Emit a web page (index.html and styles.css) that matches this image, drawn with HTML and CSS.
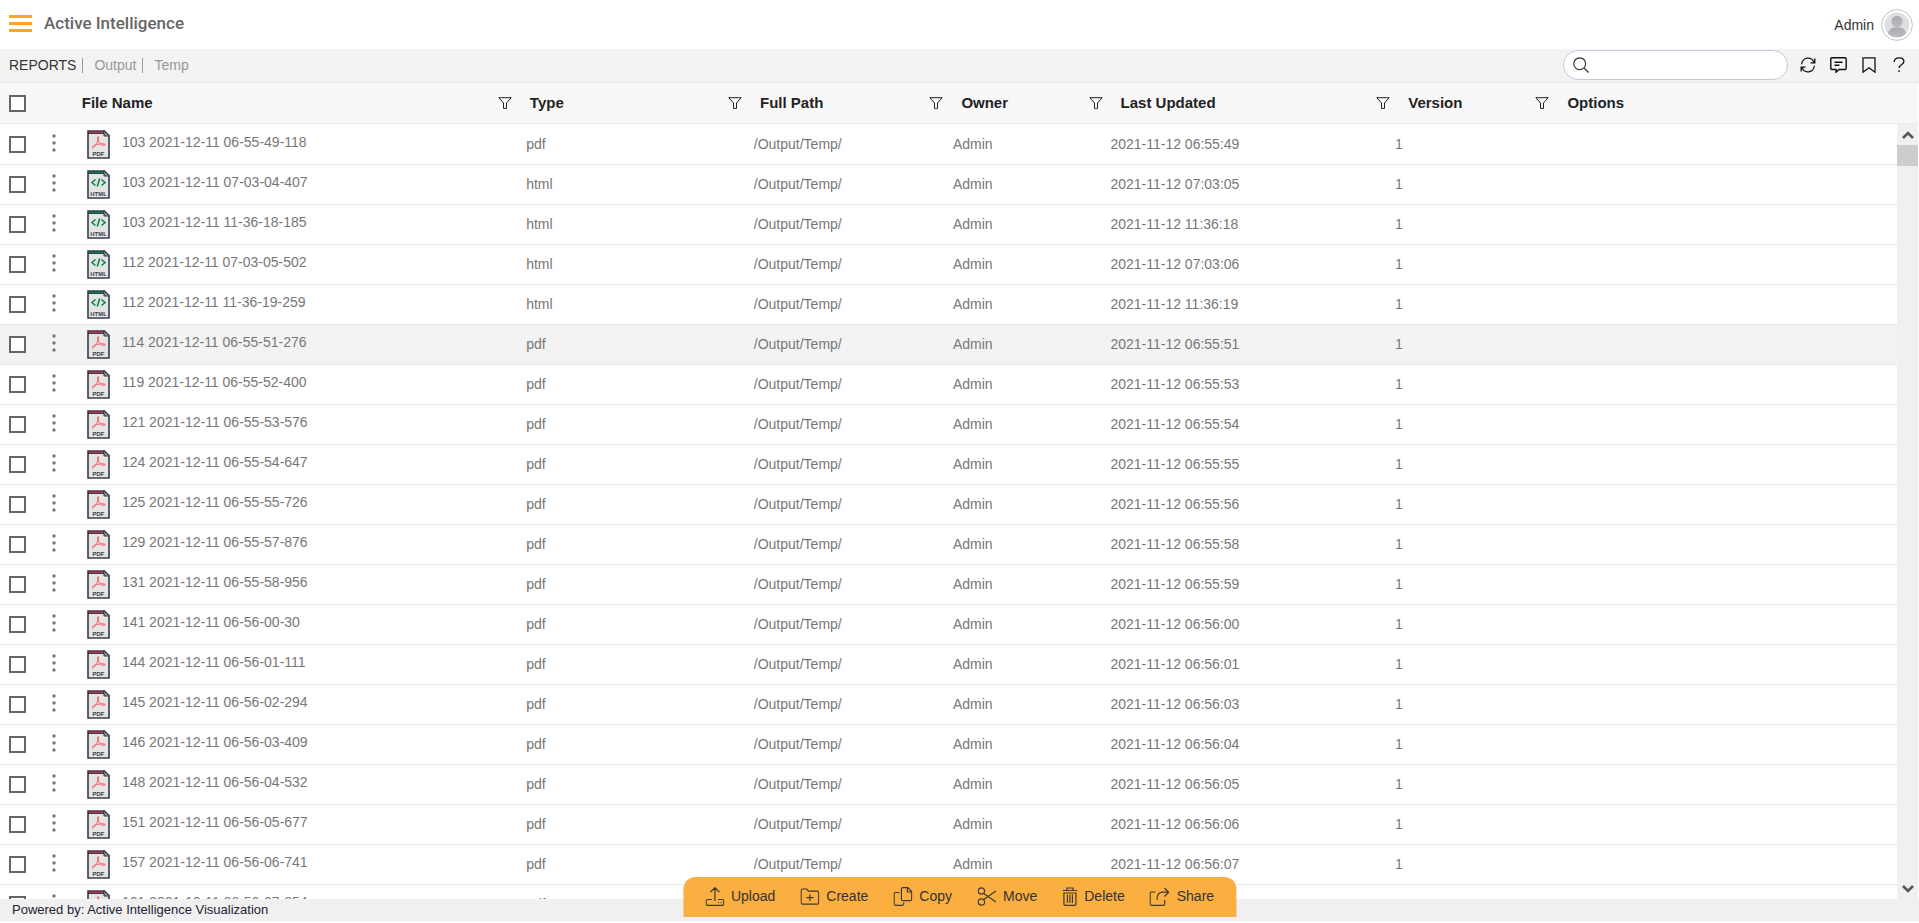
FILE: index.html
```html
<!DOCTYPE html>
<html lang="en">
<head>
<meta charset="utf-8">
<meta name="viewport" content="width=device-width, initial-scale=1">
<title>Active Intelligence - Reports</title>
<link rel="stylesheet" href="styles.css">
</head>
<body>
<svg class="sprite" aria-hidden="true">
  <symbol id="filter" viewBox="0 0 14 12"><path d="M.8.7h12.4L8.5 6v5.4h-3V6z" fill="none" stroke="currentColor" stroke-linejoin="round"/></symbol>
  <symbol id="more" viewBox="0 0 4 18"><g fill="currentColor"><circle cx="2" cy="2" r="1.7"/><circle cx="2" cy="9" r="1.7"/><circle cx="2" cy="16" r="1.7"/></g></symbol>
  <symbol id="file" viewBox="0 0 23 29">
    <path d="M1 1h16.500L22 5.500V28H1z" fill="#e4e4e4" stroke="#343f4b" stroke-width="1.600"/>
    <path d="M1 1h16l2.500 3H1z" fill="#343f4b"/>
    <path d="M17 .5V6h5.500z" fill="#8b949d" stroke="#343f4b"/>
  </symbol>
  <symbol id="pdf" viewBox="0 0 23 29">
    <use href="#file"/>
    <path d="M2 2.300h14" stroke="#d6304a" stroke-width="1.300"/>
    <path d="M11.300 6.500c-1.600.2-.6 3.500.4 5.300 1.300 2.200 3.500 4 5.600 3.500 2.600-.7-.4-2.400-6.800-.9-3.400.8-5.700 2.200-5 3.300 1 1 4.200-3.600 5.500-7.100.7-2 .9-4.200.3-4.100z" fill="none" stroke="#f5505f" stroke-width=".9"/>
    <text class="file-label" x="11.500" y="25.500" text-anchor="middle">PDF</text>
  </symbol>
  <symbol id="html" viewBox="0 0 23 29">
    <use href="#file"/>
    <path d="M2 2.300h14" stroke="#12794a" stroke-width="1.300"/>
    <path d="M8.500 9.500L5 12.500l3.500 3M14.500 9.500l3.500 3-3.500 3M12.700 8.500l-2.400 8" fill="none" stroke="#118548" stroke-width="1.600"/>
    <text class="file-label" x="11.500" y="25.500" text-anchor="middle">HTML</text>
  </symbol>
</svg>

<header class="masthead">
  <button class="icon-button menu" type="button" aria-label="Menu"><span></span><span></span><span></span></button>
  <h1 class="brand">Active Intelligence</h1>
  <div class="user">
    <span>Admin</span>
    <button class="icon-button avatar" type="button" aria-label="Account">
      <svg viewBox="0 0 32 32" width="32" height="32">
        <defs>
          <linearGradient id="body" x2="0" y2="1"><stop stop-color="#aaacb0"/><stop offset="1" stop-color="#b9bbbf"/></linearGradient>
          <clipPath id="disc"><circle cx="16" cy="16" r="12.500"/></clipPath>
        </defs>
        <circle cx="16" cy="16" r="15.400" fill="#fff" stroke="#c4c4c4"/>
        <circle cx="16" cy="16" r="12.500" fill="#dfe0e2"/>
        <g fill="url(#body)" clip-path="url(#disc)"><circle cx="16" cy="12.500" r="5.700"/><path d="M6.500 28c0-6 3-9 6-9.500h7c3 .5 6 3.500 6 9.500z"/></g>
      </svg>
    </button>
  </div>
</header>

<div class="toolbar">
  <nav class="crumbs" aria-label="Breadcrumb">
    <a class="current" href="#reports">REPORTS</a>
    <a href="#output">Output</a>
    <a href="#temp">Temp</a>
  </nav>
  <label class="search">
    <svg viewBox="0 0 16 16" width="16" height="16" fill="none" stroke="#333" stroke-width="1.200"><circle cx="6.700" cy="6.700" r="5.900"/><path d="M11 11l4.500 4.500"/></svg>
    <input type="text" aria-label="Search">
  </label>
  <div class="tools">
    <button class="icon-button" type="button" aria-label="Refresh">
      <svg viewBox="0 0 16 16" width="16" height="16" fill="none" stroke="#111" stroke-width="1.300"><path d="M1.700 7.200A6.300 6.300 0 0 1 14 5.500M14.300 8.800A6.300 6.300 0 0 1 2 10.500M14.800 1.500v4.300h-4.300M1.200 14.500v-4.300h4.300"/></svg>
    </button>
    <button class="icon-button" type="button" aria-label="Comments">
      <svg viewBox="0 0 17 16" width="17" height="16" fill="none" stroke="#111" stroke-width="1.400"><path d="M2 .8h13q1.200 0 1.200 1.200v9.300q0 1.200-1.200 1.200H9L6 15.200v-2.700H2Q.8 12.500.8 11.300V2Q.8.8 2 .8zM4.500 5.200h8M4.500 8.200h5"/></svg>
    </button>
    <button class="icon-button" type="button" aria-label="Bookmark">
      <svg viewBox="0 0 16 16" width="16" height="16" fill="none" stroke="#111" stroke-width="1.300"><path d="M2 .8h12v14.400l-6-4.500-6 4.500z"/></svg>
    </button>
    <button class="icon-button" type="button" aria-label="Help">
      <svg viewBox="0 0 16 16" width="16" height="16" fill="none" stroke="#111" stroke-width="1.300"><path d="M3.300 5C3.100 2.300 5 .8 8 .8s4.900 1.600 4.900 3.800C12.900 7.800 8 7.600 8 11M8 13.300v1.700"/></svg>
    </button>
  </div>
</div>

<main class="grid">
  <table class="files">
    <colgroup><col class="c-check"><col class="c-menu"><col class="c-name"><col class="c-type"><col class="c-path"><col class="c-owner"><col class="c-date"><col class="c-version"><col></colgroup>
    <thead>
      <tr>
        <th class="check"><input type="checkbox" aria-label="Select all files"></th>
        <th></th>
        <th><div class="heading">File Name <button class="icon-button" type="button" aria-label="Filter File Name"><svg width="14" height="12"><use href="#filter"/></svg></button></div></th>
        <th><div class="heading">Type <button class="icon-button" type="button" aria-label="Filter Type"><svg width="14" height="12"><use href="#filter"/></svg></button></div></th>
        <th><div class="heading">Full Path <button class="icon-button" type="button" aria-label="Filter Full Path"><svg width="14" height="12"><use href="#filter"/></svg></button></div></th>
        <th><div class="heading">Owner <button class="icon-button" type="button" aria-label="Filter Owner"><svg width="14" height="12"><use href="#filter"/></svg></button></div></th>
        <th><div class="heading">Last Updated <button class="icon-button" type="button" aria-label="Filter Last Updated"><svg width="14" height="12"><use href="#filter"/></svg></button></div></th>
        <th><div class="heading">Version <button class="icon-button" type="button" aria-label="Filter Version"><svg width="14" height="12"><use href="#filter"/></svg></button></div></th>
        <th><div class="heading">Options</div></th>
      </tr>
    </thead>
  </table>
  <div class="viewport">
    <div class="rows">
      <table class="files">
        <colgroup><col class="c-check"><col class="c-menu"><col class="c-name"><col class="c-type"><col class="c-path"><col class="c-owner"><col class="c-date"><col class="c-version"><col></colgroup>
        <tbody id="file-rows"></tbody>
      </table>
    </div>
    <div class="scrollbar">
      <button class="icon-button" type="button" aria-label="Scroll up"><svg viewBox="0 0 12 8" width="12" height="8" fill="none" stroke="#555" stroke-width="2.500"><path d="M1 7l5-5 5 5"/></svg></button>
      <div class="thumb"></div>
      <button class="icon-button down" type="button" aria-label="Scroll down"><svg viewBox="0 0 12 8" width="12" height="8" fill="none" stroke="#555" stroke-width="2.500"><path d="M1 1l5 5 5-5"/></svg></button>
    </div>
  </div>
</main>

<footer class="footer">Powered by: Active Intelligence Visualization</footer>

<div class="actions" role="toolbar" aria-label="File actions">
  <button type="button"><svg viewBox="0 0 19 19" width="19" height="19"><path d="M9.500 14V1M5 5l4.500-4.300L14 5M6.500 12.500H2.200Q.7 12.500.7 14v3q0 1.300 1.500 1.300h14.600q1.500 0 1.500-1.300v-3q0-1.500-1.500-1.500h-4.300M12.500 15.500h1M15 15.500h1"/></svg>Upload</button>
  <button type="button"><svg viewBox="0 0 19 19" width="19" height="19"><path d="M.7 15.500v-12Q.7 2 2.200 2h4l2 2.200h8.600q1.500 0 1.500 1.500v10q0 1.500-1.500 1.500H2.200Q.7 17.200.7 15.500zM9.500 7.200v7M6 10.700h7"/></svg>Create</button>
  <button type="button"><svg viewBox="0 0 19 19" width="19" height="19"><path d="M6 5.500H2.200Q.7 5.500.7 7v9.800q0 1.500 1.500 1.500h6.600q1.500 0 1.500-1.500v-1.500M9.500.7h5l3.800 3.800v7.700q0 1.500-1.500 1.500H9.500Q8 13.700 8 12.200v-10Q8 .7 9.500.7zM14 1v4h4"/></svg>Copy</button>
  <button type="button"><svg viewBox="0 0 19 19" width="19" height="19"><circle cx="4" cy="4" r="3.200"/><circle cx="4" cy="15" r="3.200"/><path d="M6.300 6.500L18.500 15M6.300 12.500L18.500 4"/></svg>Move</button>
  <button type="button"><svg viewBox="0 0 15 19" width="15" height="19"><path d="M0 3.500h15M4.500 3V1h6v2M1.500 6v11q0 1.300 1.300 1.300h9.400q1.300 0 1.300-1.300V6zM5 7.500v8.500M7.500 7.500v8.500M10 7.500v8.500"/></svg>Delete</button>
  <button type="button"><svg viewBox="0 0 20 19" width="20" height="19"><path d="M6 5H2.200Q.7 5 .7 6.500v10.300q0 1.500 1.500 1.500h11.600q1.500 0 1.500-1.500V13M15 1l4.300 4.200L15 9.500M19 5.200h-6Q7.500 5.500 7.500 13"/></svg>Share</button>
</div>
<script src="app.js"></script>
</body>
</html>
```

FILE: styles.css
```css
* {
  box-sizing: border-box;
}

body {
  margin: 0;
  height: 100vh;
  display: flex;
  flex-direction: column;
  background: #fff;
  color: #333;
  font: 14px/20px "Liberation Sans", Arial, sans-serif;
}

button {
  font: inherit;
  color: inherit;
}

svg {
  display: block;
}

.sprite {
  position: absolute;
  width: 0;
  height: 0;
}

.icon-button {
  display: flex;
  align-items: center;
  justify-content: center;
  padding: 0;
  border: 0;
  background: none;
  cursor: pointer;
}

/* Masthead */
.masthead {
  display: flex;
  align-items: center;
  height: 49px;
  flex: none;
  padding: 0 6px 3px 9px;
}

.menu {
  flex-direction: column;
  justify-content: space-between;
  width: 23px;
  height: 17px;
}

.menu span {
  width: 100%;
  height: 3px;
  background: #fba528;
}

.brand {
  margin: 0 0 0 12px;
  color: #666;
  font: 500 17px/24px Roboto, "Liberation Sans", sans-serif;
}

.user {
  display: flex;
  align-items: center;
  gap: 7px;
  margin-left: auto;
  padding-top: 4px;
}

/* Toolbar */
.toolbar {
  display: flex;
  align-items: center;
  height: 34px;
  flex: none;
  padding: 0 12px 2px 9px;
  background: #f3f3f3;
  border-bottom: 1px solid #e6e6e6;
}

.crumbs {
  display: flex;
  align-items: center;
  gap: 11px;
  line-height: 15px;
  padding-top: 2px;
}

.crumbs a {
  color: #999;
  text-decoration: none;
}

.crumbs a:not(:last-child) {
  padding-right: 6px;
  border-right: 1px solid #999;
}

.crumbs .current {
  color: #333;
}

.search {
  display: flex;
  align-items: center;
  gap: 8px;
  width: 225px;
  height: 30px;
  margin-left: auto;
  padding: 0 12px 0 9px;
  background: #fff;
  border: 1px solid #c3c9dc;
  border-radius: 15px;
}

.search input {
  flex: 1;
  min-width: 0;
  border: 0;
  outline: 0;
  background: none;
  font: inherit;
}

.tools {
  display: flex;
  gap: 14px;
  margin-left: 12px;
}

/* Grid */
.grid {
  flex: 1;
  min-height: 0;
  display: flex;
  flex-direction: column;
  margin-right: 1px;
}

.files {
  width: 100%;
  table-layout: fixed;
  border-collapse: separate;
  border-spacing: 0;
}

.c-check { width: 2%; }
.c-menu { width: 2%; }
.c-name { width: 23%; }
.c-type { width: 12%; }
.c-path { width: 10.5%; }
.c-owner { width: 8.3%; }
.c-date { width: 15%; }
.c-version { width: 8.3%; }

th,
td {
  padding: 0 6px 0 12px;
  text-align: left;
  white-space: nowrap;
}

th {
  height: 41px;
  background: #f8f8f8;
  border-bottom: 1px solid #ececec;
  color: #222;
  font-size: 15px;
}

th:nth-child(3) {
  padding-left: 5px;
}

td {
  height: 40px;
  padding: 0 0 1px 14px;
  border-bottom: 1px solid #e6e6e6;
  color: #777;
}

.heading {
  display: flex;
  align-items: center;
  justify-content: space-between;
}

.check {
  padding: 0 0 0 9px;
}

input[type="checkbox"] {
  appearance: none;
  display: block;
  width: 17px;
  height: 17px;
  margin: 0;
  background: #fff;
  border: 2px solid #666;
}

.viewport {
  flex: 1;
  min-height: 0;
  display: flex;
}

.rows {
  flex: 1;
  overflow: hidden;
  padding-top: 1px;
}

.hover td {
  background: #f3f3f3;
}

.row-menu {
  padding: 0 0 4px 14px;
}

.name {
  padding: 0 0 0 11px;
}

.name a {
  display: flex;
  align-items: center;
  gap: 12px;
  color: inherit;
  text-decoration: none;
}

.name span {
  padding-bottom: 6px;
}

.file-label {
  fill: #343f4b;
  font: bold 6px/6px "Liberation Sans", sans-serif;
}

.scrollbar {
  display: flex;
  flex-direction: column;
  width: 21px;
  background: #f0f0f0;
}

.scrollbar button {
  height: 21px;
}

.scrollbar .down {
  margin-top: auto;
}

.thumb {
  height: 21px;
  background: #cdcdcd;
}

/* Footer */
.footer {
  flex: none;
  height: 24px;
  padding: 1px 12px;
  background: #f0f0f0;
  border-bottom: 2px solid #fafafa;
  color: #223;
  font-size: 13px;
}

/* Floating action bar */
.actions {
  position: absolute;
  bottom: 6px;
  left: 50%;
  transform: translateX(-50%);
  display: flex;
  gap: 25px;
  height: 40px;
  padding: 0 22px 2px;
  background: rgba(250, 172, 58, 0.97);
  border-radius: 12px 12px 0 0;
}

.actions button {
  display: flex;
  align-items: center;
  gap: 7px;
  padding: 0;
  border: 0;
  background: none;
  white-space: nowrap;
  cursor: pointer;
}

.actions svg {
  fill: none;
  stroke: #3f3a30;
  stroke-width: 1.2;
}
```

FILE: app.js
```js
const files = [
  ["103 2021-12-11 06-55-49-118", "pdf", "06:55:49"],
  ["103 2021-12-11 07-03-04-407", "html", "07:03:05"],
  ["103 2021-12-11 11-36-18-185", "html", "11:36:18"],
  ["112 2021-12-11 07-03-05-502", "html", "07:03:06"],
  ["112 2021-12-11 11-36-19-259", "html", "11:36:19"],
  ["114 2021-12-11 06-55-51-276", "pdf", "06:55:51"],
  ["119 2021-12-11 06-55-52-400", "pdf", "06:55:53"],
  ["121 2021-12-11 06-55-53-576", "pdf", "06:55:54"],
  ["124 2021-12-11 06-55-54-647", "pdf", "06:55:55"],
  ["125 2021-12-11 06-55-55-726", "pdf", "06:55:56"],
  ["129 2021-12-11 06-55-57-876", "pdf", "06:55:58"],
  ["131 2021-12-11 06-55-58-956", "pdf", "06:55:59"],
  ["141 2021-12-11 06-56-00-30", "pdf", "06:56:00"],
  ["144 2021-12-11 06-56-01-111", "pdf", "06:56:01"],
  ["145 2021-12-11 06-56-02-294", "pdf", "06:56:03"],
  ["146 2021-12-11 06-56-03-409", "pdf", "06:56:04"],
  ["148 2021-12-11 06-56-04-532", "pdf", "06:56:05"],
  ["151 2021-12-11 06-56-05-677", "pdf", "06:56:06"],
  ["157 2021-12-11 06-56-06-741", "pdf", "06:56:07"],
  ["161 2021-12-11 06-56-07-854", "pdf", "06:56:08"],
];
const highlighted = 5;

document.getElementById("file-rows").innerHTML = files
  .map(([name, type, time], i) => `
    <tr${i === highlighted ? ' class="hover"' : ""}>
      <td class="check"><input type="checkbox" aria-label="Select ${name}"></td>
      <td class="row-menu"><button class="icon-button" type="button" aria-label="Options for ${name}"><svg width="4" height="18"><use href="#more"/></svg></button></td>
      <td class="name"><a href="#file-${i}"><svg width="23" height="29"><use href="#${type}"/></svg><span>${name}</span></a></td>
      <td>${type}</td>
      <td>/Output/Temp/</td>
      <td>Admin</td>
      <td>2021-11-12 ${time}</td>
      <td>1</td>
      <td></td>
    </tr>`)
  .join("");
```
